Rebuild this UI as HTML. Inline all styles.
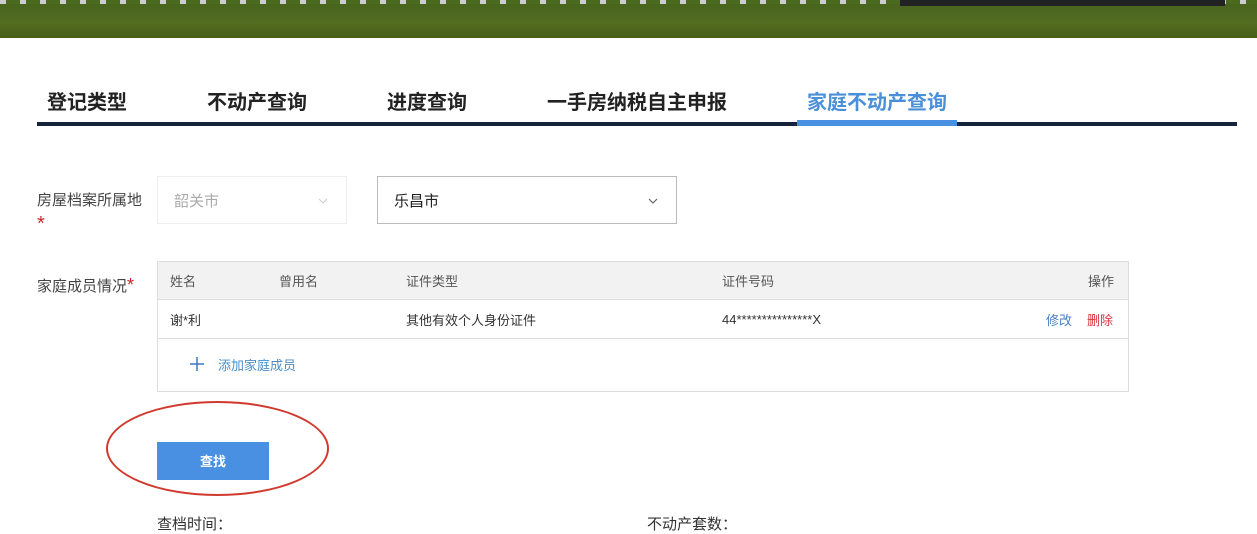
<!DOCTYPE html>
<html><head><meta charset="utf-8"><style>
*{margin:0;padding:0;box-sizing:border-box}
body{width:1257px;height:534px;overflow:hidden;background:#fff;font-family:"Liberation Sans","Noto Sans CJK SC",sans-serif;position:relative;color:#333}
.a{position:absolute;white-space:nowrap}
.hdr{left:0;top:0;width:1257px;height:38px;background:linear-gradient(#45621c,#536d22 60%,#485f18)}
.tab{top:86px;font-size:20px;font-weight:bold;color:#222}
.sel{border:1px solid #ddd;font-size:15px}
.th{font-size:13px;color:#555}
.td{font-size:13px;color:#333}
</style></head><body>
<div class="a hdr"></div>
<div class="a" style="left:0;top:0;width:1257px;height:4px;background:repeating-linear-gradient(90deg,#ccc 0 6px,#4a6a1e 6px 20px)"></div>
<div class="a" style="left:900px;top:0;width:325px;height:6px;background:#222"></div>
<div class="a tab" style="left:47px">登记类型</div>
<div class="a tab" style="left:207px">不动产查询</div>
<div class="a tab" style="left:387px">进度查询</div>
<div class="a tab" style="left:547px">一手房纳税自主申报</div>
<div class="a tab" style="left:807px;color:#4a8fd8">家庭不动产查询</div>
<div class="a" style="left:37px;top:122px;width:1200px;height:4px;background:#15243a"></div>
<div class="a" style="left:797px;top:120px;width:160px;height:6px;background:#4a90e2"></div>
<div class="a" style="left:37px;top:189px;font-size:15px;color:#444">房屋档案所属地</div>
<div class="a" style="left:37px;top:213px;font-size:20px;color:#c0282e">*</div>
<div class="a sel" style="left:157px;top:176px;width:190px;height:48px;border-color:#eee"><span class="a" style="left:16px;top:13px;color:#aaa">韶关市</span><svg class="a" style="left:160px;top:20px" width="10" height="8"><path d="M1 2l4 4 4-4" fill="none" stroke="#ccc" stroke-width="1"/></svg></div>
<div class="a sel" style="left:377px;top:176px;width:300px;height:48px;border-color:#bbb"><span class="a" style="left:16px;top:13px;color:#222">乐昌市</span><svg class="a" style="left:270px;top:20px" width="10" height="8"><path d="M1 2l4 4 4-4" fill="none" stroke="#666" stroke-width="1.2"/></svg></div>
<div class="a" style="left:37px;top:275px;font-size:15px;color:#444">家庭成员情况<span style="color:#c0282e;font-size:18px">*</span></div>
<div class="a" style="left:157px;top:261px;width:972px;height:131px;border:1px solid #ddd"></div>
<div class="a" style="left:158px;top:262px;width:970px;height:38px;background:#f2f2f2;border-bottom:1px solid #ddd"></div>
<div class="a th" style="left:170px;top:271px">姓名</div>
<div class="a th" style="left:279px;top:271px">曾用名</div>
<div class="a th" style="left:406px;top:271px">证件类型</div>
<div class="a th" style="left:722px;top:271px">证件号码</div>
<div class="a th" style="left:1088px;top:271px">操作</div>
<div class="a" style="left:158px;top:338px;width:970px;height:1px;background:#ddd"></div>
<div class="a td" style="left:170px;top:310px">谢*利</div>
<div class="a td" style="left:406px;top:310px">其他有效个人身份证件</div>
<div class="a td" style="left:722px;top:312px">44***************X</div>
<div class="a td" style="left:1046px;top:310px;color:#4a7fc1">修改</div>
<div class="a td" style="left:1087px;top:310px;color:#d9333f">删除</div>
<svg class="a" style="left:190px;top:357px" width="14" height="14"><path d="M7 0v14M0 7h14" stroke="#3a7ac0" stroke-width="1.5"/></svg>
<div class="a td" style="left:218px;top:355px;color:#4a8ec7">添加家庭成员</div>
<div class="a" style="left:157px;top:442px;width:112px;height:38px;background:#4a90e2;color:#fff;font-size:13px;font-weight:bold;text-align:center;line-height:40px">查找</div>
<div class="a" style="left:106px;top:401px;width:223px;height:95px;border:2px solid #d03a2e;border-radius:50%"></div>
<div class="a" style="left:157px;top:513px;font-size:15px;color:#333">查档时间：</div>
<div class="a" style="left:647px;top:513px;font-size:15px;color:#333">不动产套数：</div>
</body></html>
